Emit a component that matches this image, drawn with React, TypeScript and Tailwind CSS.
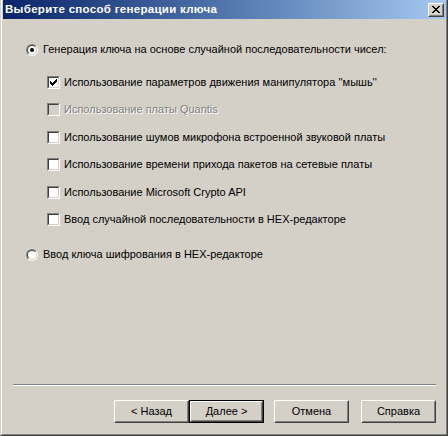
import React from "react";

const FONT = "font-['Liberation_Sans',Arial,sans-serif]";

type Opt = { label: string; checked?: boolean; disabled?: boolean; mt: string };

const OPTIONS: Opt[] = [
  { label: "Использование параметров движения манипулятора ''мышь''", checked: true, mt: "mt-[20px]" },
  { label: "Использование платы Quantis", disabled: true, mt: "mt-[14px]" },
  { label: "Использование шумов микрофона встроенной звуковой платы", mt: "mt-[15px]" },
  { label: "Использование времени прихода пакетов на сетевые платы", mt: "mt-[14px]" },
  { label: "Использование Microsoft Crypto API", mt: "mt-[15px]" },
  { label: "Ввод случайной последовательности в HEX-редакторе", mt: "mt-[14px]" },
];

function CheckBox({ checked, disabled }: { checked?: boolean; disabled?: boolean }) {
  return (
    <div className="h-[13px] w-[13px] shrink-0 border border-t-[#808080] border-l-[#808080] border-r-white border-b-white">
      <div
        className={`flex h-full w-full items-center justify-center border border-t-[#404040] border-l-[#404040] border-r-[#d4d0c8] border-b-[#d4d0c8] ${
          disabled ? "bg-[#d4d0c8]" : "bg-white"
        }`}
      >
        {checked && (
          <svg width="7" height="7" viewBox="0 0 7 7" shapeRendering="crispEdges">
            <path d="M0 2h1v3H0zM1 3h1v3H1zM2 4h1v3H2zM3 3h1v3H3zM4 2h1v3H4zM5 1h1v3H5zM6 0h1v3H6z" fill="#000" />
          </svg>
        )}
      </div>
    </div>
  );
}

function Radio({ checked }: { checked?: boolean }) {
  return (
    <div className="relative h-[12px] w-[12px] shrink-0 rounded-full border border-t-[#808080] border-l-[#808080] border-r-white border-b-white">
      <div className="flex h-full w-full items-center justify-center rounded-full border border-t-[#404040] border-l-[#404040] border-r-[#d4d0c8] border-b-[#d4d0c8] bg-white">
        {checked && <div className="h-[4px] w-[4px] rounded-full bg-black" />}
      </div>
    </div>
  );
}

function Button({ children, def }: { children: React.ReactNode; def?: boolean }) {
  const inner = (
    <div className="h-full w-full border border-t-white border-l-white border-r-[#404040] border-b-[#404040]">
      <div className="flex h-full w-full items-center justify-center border border-t-[#d4d0c8] border-l-[#d4d0c8] border-r-[#808080] border-b-[#808080] text-[11px] text-black">
        {children}
      </div>
    </div>
  );
  return (
    <div className={`h-[23px] w-[75px] ${def ? "border border-black" : ""}`}>{inner}</div>
  );
}

export default function App() {
  return (
    <div className={`${FONT} h-[436px] w-[448px] bg-[#d4d0c8] text-[11px] text-black`}>
      <div className="flex h-full w-full flex-col border-l border-r border-b border-l-[#d4d0c8] border-r-[#404040] border-b-[#404040]">
        <div className="flex h-full w-full flex-col border-l border-r border-b border-l-white border-r-[#808080] border-b-[#808080] pl-[1px]">
          {/* title bar */}
          <div className="flex h-[19px] items-center justify-between bg-gradient-to-r from-[#0a246a] to-[#a6caf0] pl-[2px] pr-[2px]">
            <span className="text-[11.5px] font-bold tracking-[0.3px] text-white">Выберите способ генерации ключа</span>
            <div className="h-[14px] w-[16px] border border-t-white border-l-white border-r-[#404040] border-b-[#404040] bg-[#d4d0c8]">
              <div className="flex h-full w-full items-center justify-center border border-t-[#d4d0c8] border-l-[#d4d0c8] border-r-[#808080] border-b-[#808080]">
                <svg width="8" height="7" viewBox="0 0 8 7" shapeRendering="crispEdges">
                  <path
                    d="M0 0h2v1H0zM6 0h2v1H6zM1 1h2v1H1zM5 1h2v1H5zM2 2h4v1H2zM3 3h2v1H3zM2 4h4v1H2zM1 5h2v1H1zM5 5h2v1H5zM0 6h2v1H0zM6 6h2v1H6z"
                    fill="#000"
                  />
                </svg>
              </div>
            </div>
          </div>

          {/* content */}
          <div className="flex flex-1 flex-col pt-[24px] pl-[23px]">
            <div className="flex h-[13px] items-center gap-[5px]">
              <Radio checked />
              <span>Генерация ключа на основе случайной последовательности чисел:</span>
            </div>
            <div className="flex flex-col pl-[21px]">
              {OPTIONS.map((o) => (
                <div key={o.label} className={`flex h-[13px] items-center gap-[4px] ${o.mt}`}>
                  <CheckBox checked={o.checked} disabled={o.disabled} />
                  <span className={o.disabled ? "text-[#808080] [text-shadow:1px_1px_0_#fff]" : ""}>{o.label}</span>
                </div>
              ))}
            </div>
            <div className="mt-[22px] flex h-[13px] items-center gap-[5px]">
              <Radio />
              <span>Ввод ключа шифрования в HEX-редакторе</span>
            </div>
          </div>

          {/* separator + buttons */}
          <div className="ml-[10px] mr-[10px] border-t border-b border-t-[#808080] border-b-white" />
          <div className="flex justify-end pt-[14px] pr-[10px] pb-[11px]">
            <div className="flex">
              <Button>&lt; Назад</Button>
              <Button def>Далее &gt;</Button>
            </div>
            <div className="ml-[10px]">
              <Button>Отмена</Button>
            </div>
            <div className="ml-[12px]">
              <Button>Справка</Button>
            </div>
          </div>
        </div>
      </div>
    </div>
  );
}
